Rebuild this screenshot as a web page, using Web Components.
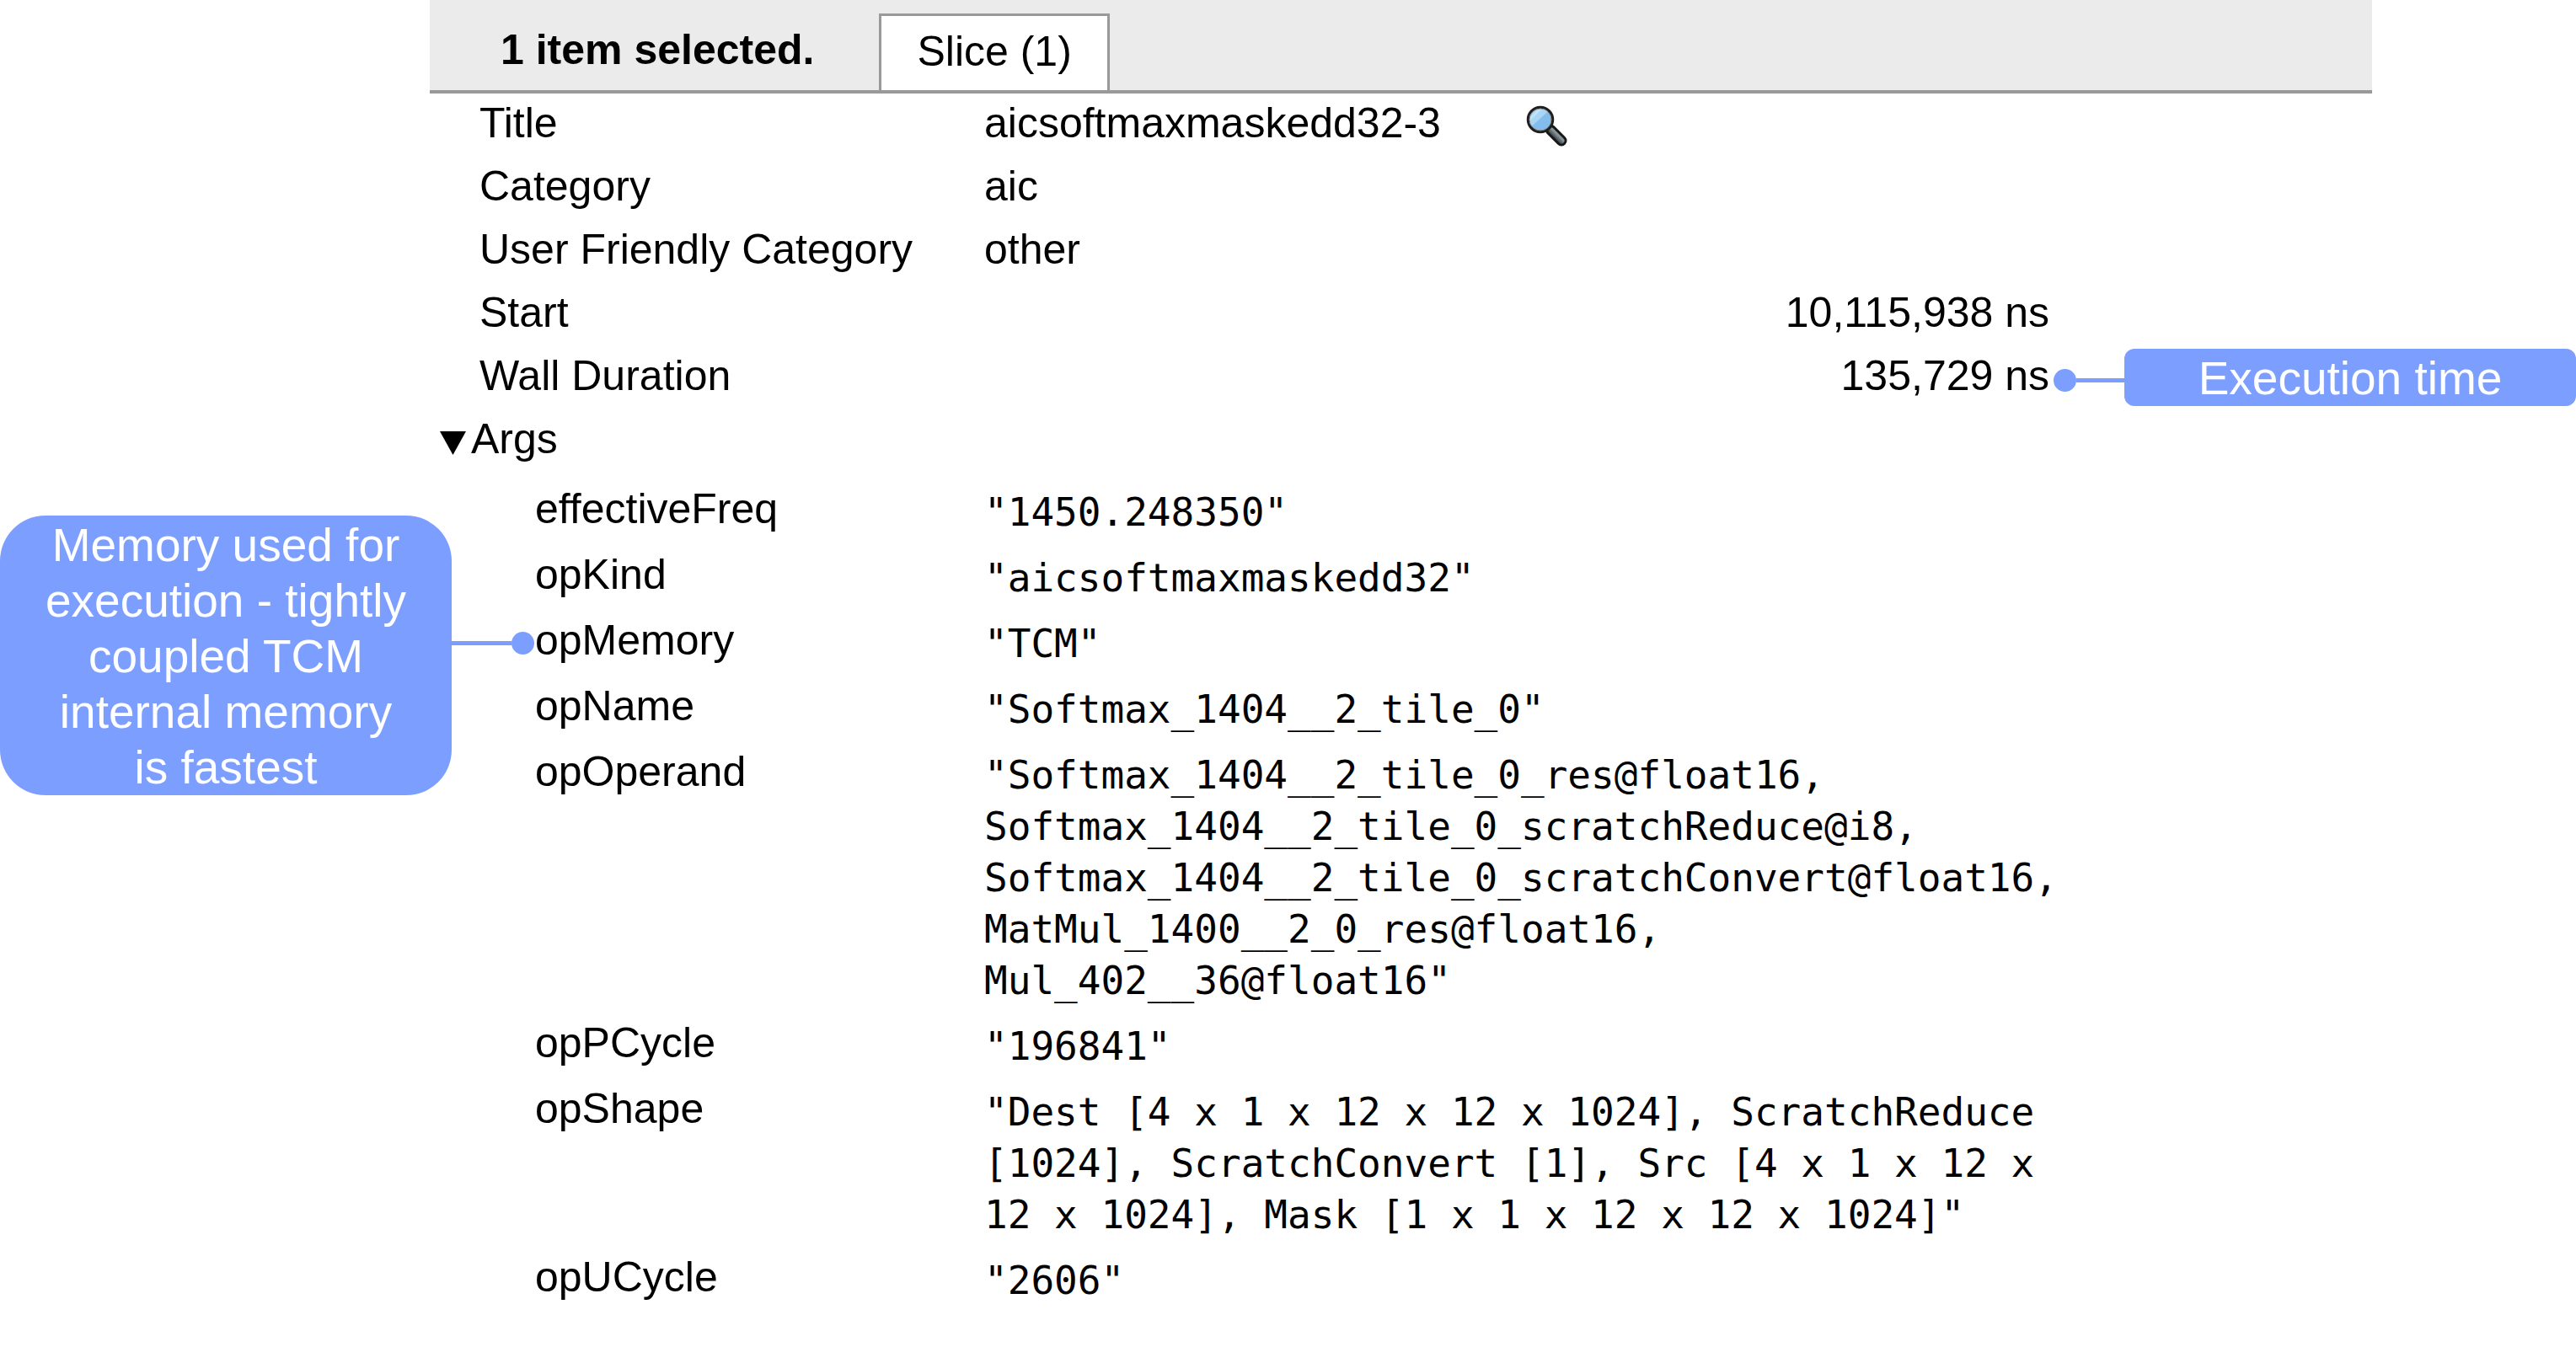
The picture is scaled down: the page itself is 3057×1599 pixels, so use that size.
<!DOCTYPE html>
<html lang="en">
<head>
<meta charset="utf-8">
<title>Slice details</title>
<style>
  body { margin: 0; background: #fff; color: #000; font-family: "Liberation Sans", Arial, sans-serif; font-size: 50px; }
</style>
</head>
<body>
<analysis-view></analysis-view>

<template id="analysis-view">
  <style>
    :host { display: grid; grid-template-columns: 510fr 2305fr 242fr; }
    main { grid-column: 2; min-width: 0; }
  </style>
  <main>
    <tab-strip label="1 item selected.">Slice (1)</tab-strip>
    <slice-details></slice-details>
    <slice-args></slice-args>
  </main>
</template>

<template id="tab-strip">
  <style>
    :host { display: flex; align-items: flex-end; gap: 77px; height: 107px; padding-left: 84px; background: #ebebeb; border-bottom: 4px solid #999; }
    h1 { margin: 0; font-size: 50px; line-height: 95px; font-weight: bold; }
    button { box-sizing: border-box; height: 91px; padding: 0 42px 4px; border: 3px solid #999; border-bottom: 0; background: #fff; color: inherit; font: inherit; line-height: 84px; }
  </style>
  <h1></h1>
  <div role="tablist"><button role="tab" aria-selected="true"><slot></slot></button></div>
</template>

<template id="slice-details">
  <style>
    :host { display: block; padding: 0 383px 0 59px; }
    table { width: 100%; table-layout: fixed; border-collapse: collapse; }
    col.name { width: 599px; }
    th, td { padding: 0 0 4px; line-height: 71px; font-weight: normal; text-align: left; position: relative; white-space: nowrap; }
    td.time { text-align: right; }
    button { margin: 0 0 0 100px; padding: 0; border: 0; background: none; line-height: 0; vertical-align: middle; }
    call-out { top: 3px; left: calc(100% + 5px); --leader: 57px; --drop: 24px; --radius: 12px; }
  </style>
  <table>
    <colgroup><col class="name"><col></colgroup>
    <tr><th scope="row">Title</th><td>aicsoftmaxmaskedd32-3<button aria-label="Find slices with this title"><search-icon></search-icon></button></td></tr>
    <tr><th scope="row">Category</th><td>aic</td></tr>
    <tr><th scope="row">User Friendly Category</th><td>other</td></tr>
    <tr><th scope="row">Start</th><td class="time">10,115,938 ns</td></tr>
    <tr><th scope="row">Wall Duration</th><td class="time">135,729 ns<call-out side="right">Execution time</call-out></td></tr>
  </table>
</template>

<template id="slice-args">
  <style>
    :host { display: block; padding: 0 357px 0 12px; }
    .toggle { display: flex; align-items: center; gap: 6px; margin: 0 0 13px; padding: 0 0 4px; border: 0; background: none; color: inherit; font: inherit; line-height: 71px; }
    .toggle svg { width: 31px; height: 28px; padding-top: 9px; }
    table { width: 100%; table-layout: fixed; border-collapse: collapse; }
    col.name { width: 646px; }
    th, td { vertical-align: top; text-align: left; line-height: 61px; font-weight: normal; }
    th { padding: 0 0 0 113px; }
    td { padding: 4px 0 13px; font-family: "DejaVu Sans Mono", monospace; font-size: 46px; }
    .anchor { display: block; position: relative; }
    call-out { top: -118px; right: calc(100% + 1px); --leader: 71px; --drop: 138px; --radius: 54px; }
  </style>
  <button class="toggle" aria-expanded="true"><svg viewBox="0 0 31 28" aria-hidden="true"><path d="M0 0H31L15.500 28Z"/></svg>Args</button>
  <table>
    <colgroup><col class="name"><col></colgroup>
    <tr><th scope="row">effectiveFreq</th><td>"1450.248350"</td></tr>
    <tr><th scope="row">opKind</th><td>"aicsoftmaxmaskedd32"</td></tr>
    <tr><th scope="row"><span class="anchor">opMemory<call-out side="left">Memory used for execution - tightly coupled TCM internal memory is fastest</call-out></span></th><td>"TCM"</td></tr>
    <tr><th scope="row">opName</th><td>"Softmax_1404__2_tile_0"</td></tr>
    <tr><th scope="row">opOperand</th><td>"Softmax_1404__2_tile_0_res@float16, Softmax_1404__2_tile_0_scratchReduce@i8, Softmax_1404__2_tile_0_scratchConvert@float16, MatMul_1400__2_0_res@float16, Mul_402__36@float16"</td></tr>
    <tr><th scope="row">opPCycle</th><td>"196841"</td></tr>
    <tr><th scope="row">opShape</th><td>"Dest [4 x 1 x 12 x 12 x 1024], ScratchReduce [1024], ScratchConvert [1], Src [4 x 1 x 12 x 12 x 1024], Mask [1 x 1 x 12 x 12 x 1024]"</td></tr>
    <tr><th scope="row">opUCycle</th><td>"2606"</td></tr>
  </table>
</template>

<template id="call-out">
  <style>
    :host { --tint: #7c9fff; position: absolute; display: flex; align-items: flex-start; width: max-content; color: #fff; font-size: 55px; line-height: 66px; text-align: center; white-space: normal; }
    :host([side="right"]) { flex-direction: row-reverse; }
    .box { box-sizing: border-box; width: 536px; padding: 2px 50px 0; border-radius: var(--radius); background: var(--tint); }
    .line { width: var(--leader); height: 5px; margin-top: calc(var(--drop) + 11px); background: var(--tint); }
    .dot { width: 27px; height: 27px; margin-top: var(--drop); border-radius: 50%; background: var(--tint); }
  </style>
  <div class="box"><slot></slot></div>
  <div class="line"></div>
  <div class="dot"></div>
</template>

<template id="search-icon">
  <style>
    :host { display: inline-block; width: 52px; height: 52px; }
    svg { display: block; width: 100%; height: 100%; }
  </style>
  <svg viewBox="0 0 52 52" aria-hidden="true">
    <defs>
      <linearGradient id="handle" x1="0" y1="1" x2="1" y2="0"><stop offset="0.300" stop-color="#3c474b"/><stop offset="0.600" stop-color="#849499"/></linearGradient>
      <clipPath id="glass"><circle cx="18" cy="18" r="13"/></clipPath>
    </defs>
    <path d="M30 30L43 43" stroke="#161616" stroke-width="13" stroke-linecap="round"/>
    <path d="M31 31L43 43" stroke="url(#handle)" stroke-width="7" stroke-linecap="round"/>
    <circle cx="18" cy="18" r="14.500" fill="#82bdee" stroke="#1e1e1e" stroke-width="3.500"/>
    <path d="M0 0H36L0 33Z" fill="#a9d6f5" clip-path="url(#glass)"/>
    <path d="M19 4L4 19" stroke="#c3e3f8" stroke-width="3" clip-path="url(#glass)"/>
    <circle cx="18" cy="18" r="13" fill="none" stroke="#8b8b8b" stroke-width="1"/>
  </svg>
</template>

<script>
  class TemplateElement extends HTMLElement {
    constructor() {
      super();
      const source = document.getElementById(this.localName);
      this.attachShadow({ mode: "open" }).append(document.importNode(source.content, true));
    }
  }

  class CallOut extends TemplateElement {}
  class SearchIcon extends TemplateElement {}
  class SliceDetails extends TemplateElement {}
  class AnalysisView extends TemplateElement {}

  class TabStrip extends TemplateElement {
    connectedCallback() {
      this.shadowRoot.querySelector("h1").textContent = this.getAttribute("label");
    }
  }

  class SliceArgs extends TemplateElement {
    connectedCallback() {
      const toggle = this.shadowRoot.querySelector(".toggle");
      const table = this.shadowRoot.querySelector("table");
      toggle.addEventListener("click", () => {
        table.hidden = !table.hidden;
        toggle.setAttribute("aria-expanded", String(!table.hidden));
      });
    }
  }

  customElements.define("call-out", CallOut);
  customElements.define("search-icon", SearchIcon);
  customElements.define("tab-strip", TabStrip);
  customElements.define("slice-details", SliceDetails);
  customElements.define("slice-args", SliceArgs);
  customElements.define("analysis-view", AnalysisView);
</script>
</body>
</html>
